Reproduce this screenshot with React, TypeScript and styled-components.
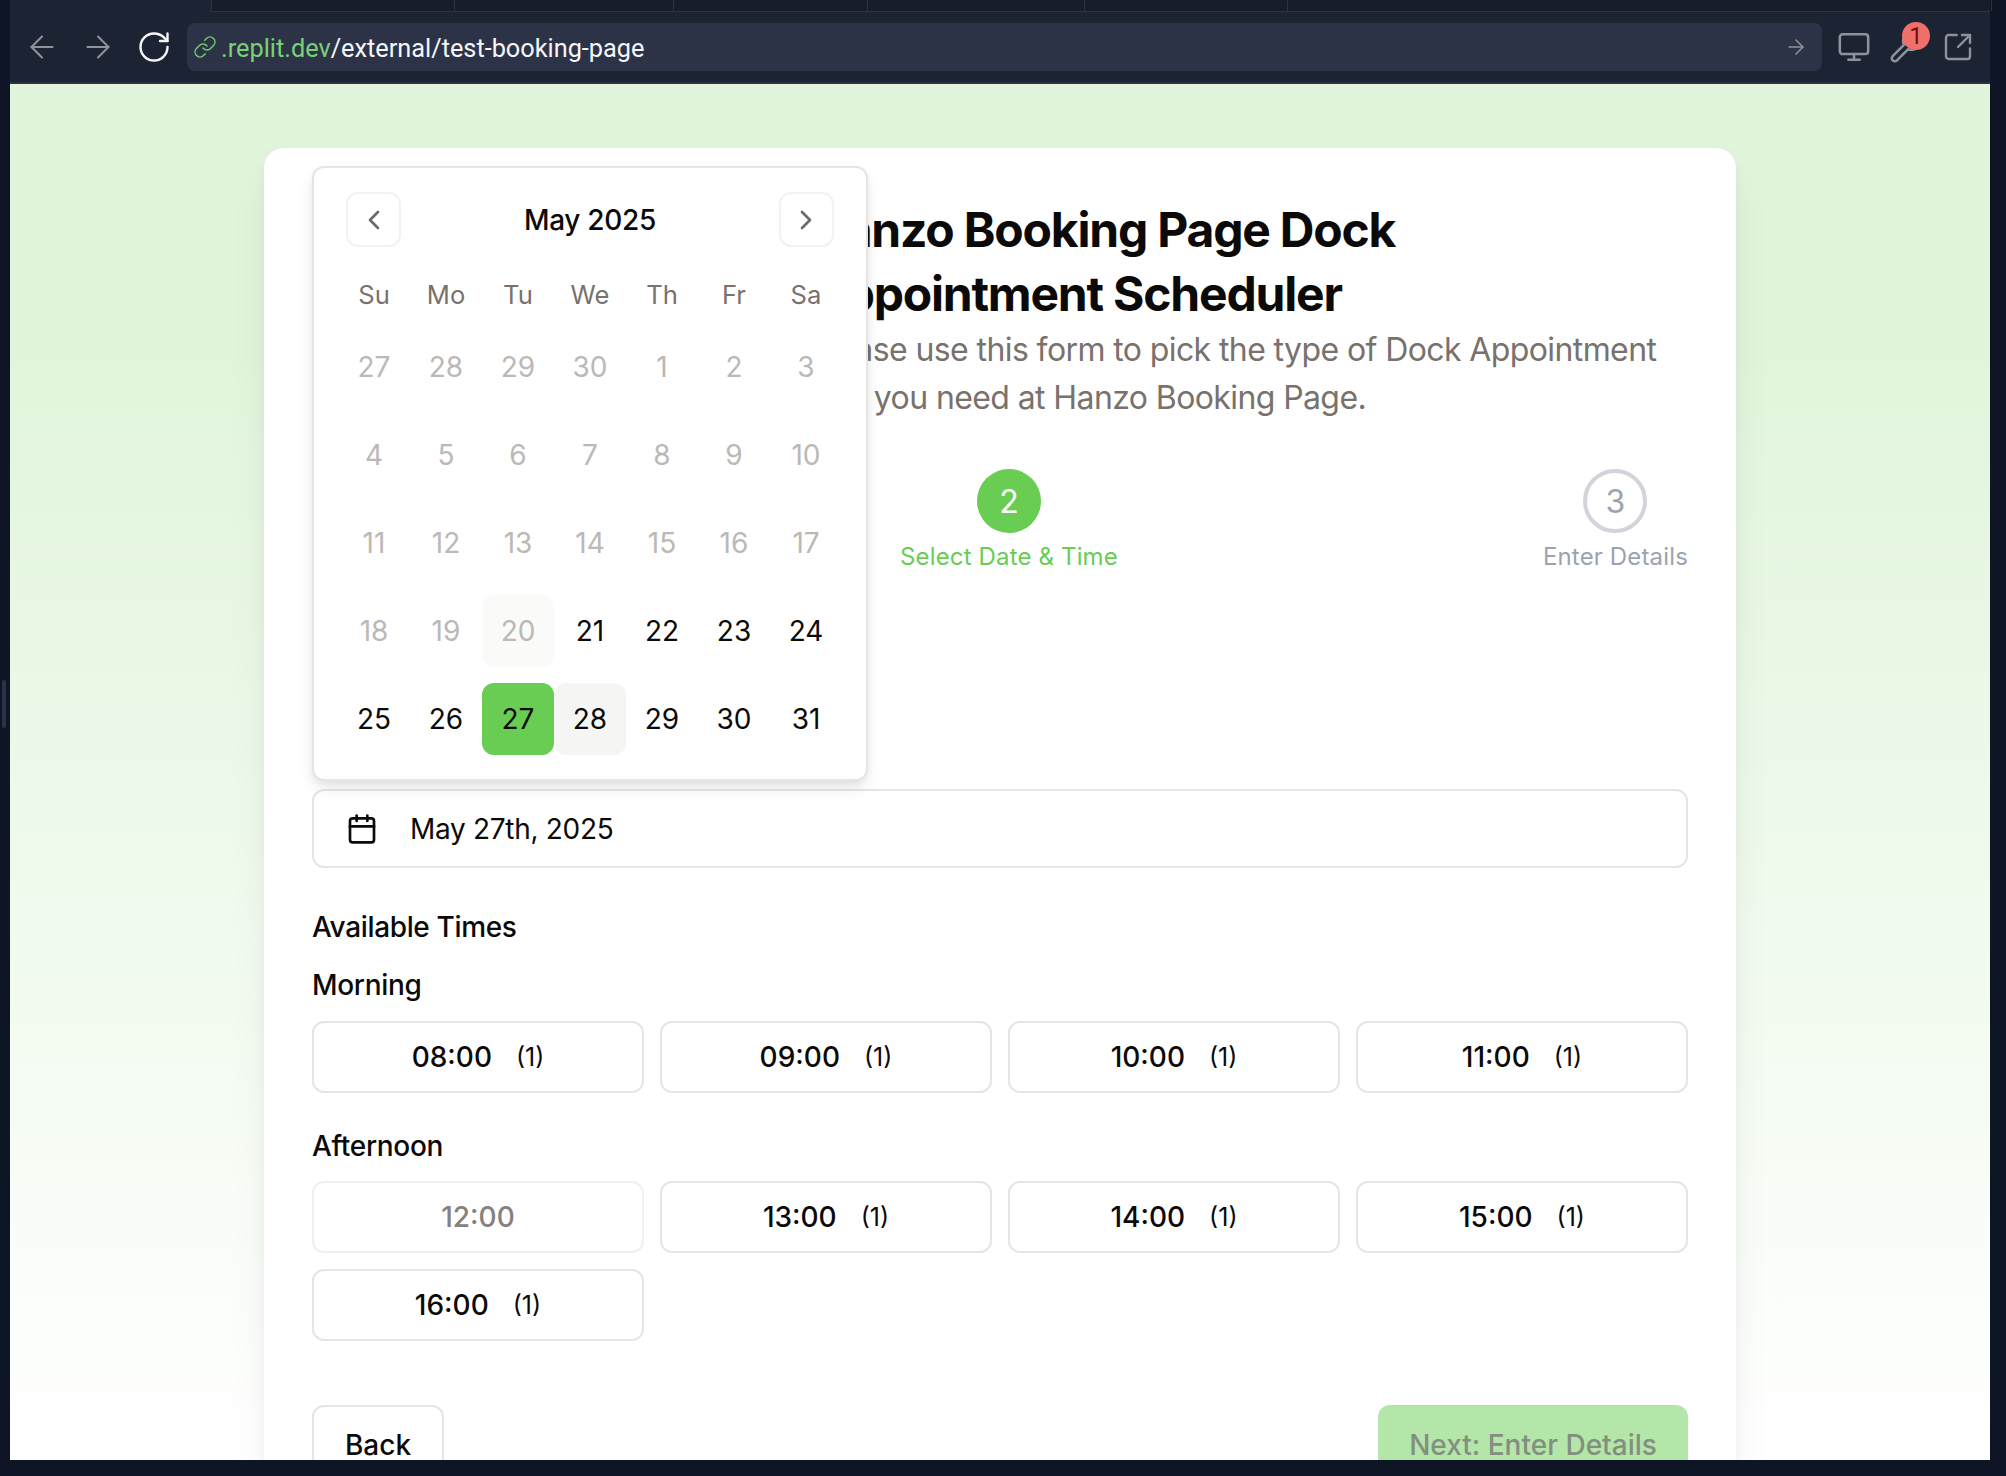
import React from "react";
import styled, { createGlobalStyle } from "styled-components";
import {
  ArrowLeft,
  ArrowRight,
  Calendar,
  ChevronLeft,
  ChevronRight,
  Link,
  Monitor,
  RotateCw,
  SquareArrowOutUpRight,
  Wrench,
} from "lucide-react";

const Global = createGlobalStyle`
  * { box-sizing: border-box; }
  html, body { margin: 0; padding: 0; background: #0e1525; }
  body { font-family: "Inter", "Liberation Sans", sans-serif; color: #0c0a09; }
`;

const Shell = styled.div`
  width: 2006px;
  height: 1476px;
  overflow: hidden;
  background: #0e1525;
  padding: 0 16px 16px 10px;
  display: flex;
  flex-direction: column;
  position: relative;
`;

const ResizeHandle = styled.div`
  position: absolute;
  left: 2px;
  top: 680px;
  width: 4px;
  height: 48px;
  border-radius: 2px;
  background: #2b3245;
`;

const BrowserBar = styled.div`
  height: 84px;
  flex: none;
  background: #1c2333;
  border-bottom: 2px solid #2b3245;
`;

const TabStrip = styled.div`
  height: 12px;
  margin-left: 201px;
  display: flex;
  background: #181d2c;
  border-bottom: 1px solid #2b3245;
  border-left: 1px solid #2b3245;
`;

const TabCell = styled.div<{ $w: number }>`
  width: ${(p) => p.$w}px;
  flex: none;
  border-right: 1px solid #2b3245;
`;

const Toolbar = styled.div`
  height: 48px;
  margin-top: 11px;
  padding: 0 14px 0 14px;
  display: flex;
  align-items: center;
`;

const NavGroup = styled.div`
  display: flex;
  gap: 20px;
  margin-right: 15px;
`;

const ToolIcon = styled.div<{ $light?: boolean }>`
  position: relative;
  width: 36px;
  height: 36px;
  flex: none;
  display: flex;
  align-items: center;
  justify-content: center;
  color: ${(p) => (p.$light ? "#f5f6f8" : "#8e929b")};
`;

const UrlBar = styled.div`
  flex: 1;
  height: 48px;
  background: #2d3347;
  border-radius: 8px;
  padding: 0 14px 0 6px;
  display: flex;
  align-items: center;
  font-family: "Roboto", "Liberation Sans", sans-serif;
  font-size: 25.3px;
  color: #f5f6f8;
`;

const UrlLink = styled.span`
  display: flex;
  color: #6fce6b;
  margin-right: 4px;
`;

const UrlHost = styled.span`
  color: #78d273;
  position: relative;
  top: 1px;
`;

const UrlPath = styled.span`
  flex: 1;
  position: relative;
  top: 1px;
`;

const UrlGo = styled.span`
  display: flex;
  color: #8e929b;
`;

const ToolGroup = styled.div`
  display: flex;
  gap: 16px;
  margin-left: 14px;
`;

const Badge = styled.span`
  position: absolute;
  top: -7px;
  left: 14px;
  width: 28px;
  height: 28px;
  border-radius: 50%;
  background: #f06f6a;
  color: #6d0f0f;
  font-family: "Roboto", sans-serif;
  font-size: 24px;
  line-height: 28px;
  text-align: center;
`;

const Page = styled.main`
  flex: 1;
  min-height: 0;
  overflow: hidden;
  padding-top: 64px;
  display: flex;
  justify-content: center;
  align-items: flex-start;
  background: linear-gradient(180deg, #e1f5dc 0%, #e1f5dc 20%, #ffffff 100%);
`;

const Card = styled.section`
  position: relative;
  width: 1472px;
  flex: none;
  padding: 50px 48px 48px;
  background: #fff;
  border-radius: 20px;
  box-shadow: 0 20px 40px rgba(0, 0, 0, 0.05), 0 4px 12px rgba(0, 0, 0, 0.04);
`;

const Header = styled.header`
  padding-left: 498px;
`;

const Title = styled.h1`
  margin: 0;
  font-size: 48px;
  line-height: 64px;
  font-weight: 700;
  letter-spacing: -1.2px;
`;

const Subtitle = styled.p`
  margin: 0;
  font-size: 32px;
  line-height: 48px;
  letter-spacing: -0.6px;
  color: #78716c;
`;

const Steps = styled.div`
  margin-top: 47px;
  display: flex;
  justify-content: space-between;
`;

const Step = styled.div`
  display: flex;
  flex-direction: column;
  align-items: center;
`;

const StepSlot = styled.div`
  width: 163px;
`;

const StepDot = styled.div<{ $active?: boolean }>`
  width: 64px;
  height: 64px;
  border-radius: 50%;
  display: flex;
  align-items: center;
  justify-content: center;
  font-size: 32px;
  background: ${(p) => (p.$active ? "#68cd52" : "#fff")};
  color: ${(p) => (p.$active ? "#fff" : "#9ca3af")};
  border: ${(p) => (p.$active ? "none" : "4px solid #d1d5db")};
`;

const StepLabel = styled.div<{ $active?: boolean }>`
  margin-top: 8px;
  font-size: 24px;
  line-height: 32px;
  letter-spacing: 0.15px;
  color: ${(p) => (p.$active ? "#68cd52" : "#9ca3af")};
`;

const DateField = styled.div`
  margin-top: 216px;
  height: 79px;
  border: 2px solid #e7e5e4;
  border-radius: 12px;
  padding: 0 32px;
  display: flex;
  align-items: center;
  gap: 32px;
  font-size: 28px;
  letter-spacing: -0.3px;
`;

const Heading = styled.div`
  margin-top: 39px;
  font-size: 28px;
  line-height: 40px;
  font-weight: 450;
  letter-spacing: -0.35px;
`;

const SubHeading = styled.div`
  font-size: 28px;
  line-height: 40px;
  font-weight: 450;
  letter-spacing: -0.3px;
`;

const MorningHeading = styled(SubHeading)`
  margin-top: 18px;
`;

const AfternoonHeading = styled(SubHeading)`
  margin-top: 33px;
  margin-bottom: -1px;
`;

const TimeGrid = styled.div`
  margin-top: 16px;
  display: grid;
  grid-template-columns: repeat(4, 1fr);
  gap: 16px;
`;

const TimeButton = styled.div<{ $disabled?: boolean }>`
  height: 72px;
  border: 2px solid ${(p) => (p.$disabled ? "#f1f0ef" : "#e7e5e4")};
  border-radius: 12px;
  display: flex;
  align-items: center;
  justify-content: center;
  font-size: 28px;
  font-weight: 450;
  color: ${(p) => (p.$disabled ? "#85817e" : "#0c0a09")};
`;

const Count = styled.span`
  margin-left: 24px;
  font-size: 25px;
  font-weight: 400;
`;

const Footer = styled.div`
  margin-top: 64px;
  display: flex;
  justify-content: space-between;
`;

const BackButton = styled.div`
  width: 132px;
  height: 80px;
  border: 2px solid #e7e5e4;
  border-radius: 12px;
  display: flex;
  align-items: center;
  justify-content: center;
  font-size: 28px;
  font-weight: 450;
`;

const NextButton = styled.div`
  width: 310px;
  height: 80px;
  border-radius: 12px;
  background: #b3e6a8;
  color: #838f80;
  display: flex;
  align-items: center;
  justify-content: center;
  font-size: 28px;
  font-weight: 450;
`;

const Popover = styled.div`
  position: absolute;
  left: 48px;
  top: 18px;
  width: 556px;
  padding: 24px;
  background: #fff;
  border: 2px solid #e7e5e4;
  border-radius: 12px;
  box-shadow: 0 8px 16px -2px rgba(0, 0, 0, 0.1), 0 4px 8px -2px rgba(0, 0, 0, 0.06);
`;

const MonthRow = styled.div`
  padding: 0 8px;
  height: 55px;
  display: flex;
  align-items: center;
  justify-content: space-between;
`;

const MonthLabel = styled.div`
  font-size: 28px;
  font-weight: 450;
  letter-spacing: -0.3px;
`;

const MonthNav = styled.div`
  width: 55px;
  height: 55px;
  border: 2px solid #f3f2f1;
  border-radius: 12px;
  display: flex;
  align-items: center;
  justify-content: center;
  color: #6b6b6b;
`;

const DayGrid = styled.div`
  margin-top: 27px;
  display: grid;
  grid-template-columns: repeat(7, 72px);
  row-gap: 16px;
`;

const WeekLabel = styled.div`
  height: 41px;
  display: flex;
  align-items: center;
  justify-content: center;
  font-size: 25.6px;
  color: #78716c;
`;

type DayKind = "muted" | "today" | "normal" | "selected" | "hover";

const dayBg: Record<DayKind, string> = {
  muted: "transparent",
  today: "#fafaf9",
  normal: "transparent",
  selected: "#68cd52",
  hover: "#f5f5f4",
};

const Day = styled.div<{ $kind: DayKind }>`
  height: 72px;
  border-radius: 12px;
  display: flex;
  align-items: center;
  justify-content: center;
  font-size: 28px;
  background: ${(p) => dayBg[p.$kind]};
  color: ${(p) => (p.$kind === "muted" || p.$kind === "today" ? "#bcb8b5" : "#0c0a09")};
`;

const weekDays = ["Su", "Mo", "Tu", "We", "Th", "Fr", "Sa"];
const tabs = [243, 219, 194, 217, 203, 704];

const dayKind = (n: number, inMay: boolean): DayKind => {
  if (!inMay || n < 20) return "muted";
  if (n === 20) return "today";
  if (n === 27) return "selected";
  if (n === 28) return "hover";
  return "normal";
};

const calendar: { label: number; kind: DayKind }[] = [
  ...[27, 28, 29, 30].map((n) => ({ label: n, kind: dayKind(n, false) })),
  ...Array.from({ length: 31 }, (_, i) => ({ label: i + 1, kind: dayKind(i + 1, true) })),
];

const morning = ["08:00", "09:00", "10:00", "11:00"];
const afternoon = ["13:00", "14:00", "15:00", "16:00"];

export default function App() {
  return (
    <Shell>
      <Global />
      <ResizeHandle />
      <BrowserBar>
        <TabStrip>
          {tabs.map((w, i) => (
            <TabCell key={i} $w={w} />
          ))}
        </TabStrip>
        <Toolbar>
          <NavGroup>
            <ToolIcon>
              <ArrowLeft size={36} strokeWidth={1.4} />
            </ToolIcon>
            <ToolIcon>
              <ArrowRight size={36} strokeWidth={1.4} />
            </ToolIcon>
            <ToolIcon $light>
              <RotateCw size={36} strokeWidth={1.6} />
            </ToolIcon>
          </NavGroup>
          <UrlBar>
            <UrlLink>
              <Link size={24} strokeWidth={1.5} />
            </UrlLink>
            <UrlHost>.replit.dev</UrlHost>
            <UrlPath>/external/test-booking-page</UrlPath>
            <UrlGo>
              <ArrowRight size={24} strokeWidth={1.5} />
            </UrlGo>
          </UrlBar>
          <ToolGroup>
            <ToolIcon>
              <Monitor size={34} strokeWidth={1.8} />
            </ToolIcon>
            <ToolIcon>
              <Wrench size={34} strokeWidth={1.8} />
              <Badge>1</Badge>
            </ToolIcon>
            <ToolIcon>
              <SquareArrowOutUpRight size={32} strokeWidth={1.8} />
            </ToolIcon>
          </ToolGroup>
        </Toolbar>
      </BrowserBar>
      <Page>
        <Card>
          <Header>
            <Title>Hanzo Booking Page Dock Appointment Scheduler</Title>
            <Subtitle>
              Please use this form to pick the type of Dock Appointment that you need at Hanzo Booking Page.
            </Subtitle>
          </Header>
          <Steps>
            <StepSlot />
            <Step>
              <StepDot $active>2</StepDot>
              <StepLabel $active>Select Date &amp; Time</StepLabel>
            </Step>
            <Step>
              <StepDot>3</StepDot>
              <StepLabel>Enter Details</StepLabel>
            </Step>
          </Steps>
          <DateField>
            <Calendar size={32} strokeWidth={2} />
            May 27th, 2025
          </DateField>
          <Heading>Available Times</Heading>
          <MorningHeading>Morning</MorningHeading>
          <TimeGrid>
            {morning.map((t) => (
              <TimeButton key={t}>
                {t}
                <Count>(1)</Count>
              </TimeButton>
            ))}
          </TimeGrid>
          <AfternoonHeading>Afternoon</AfternoonHeading>
          <TimeGrid>
            <TimeButton $disabled>12:00</TimeButton>
            {afternoon.map((t) => (
              <TimeButton key={t}>
                {t}
                <Count>(1)</Count>
              </TimeButton>
            ))}
          </TimeGrid>
          <Footer>
            <BackButton>Back</BackButton>
            <NextButton>Next: Enter Details</NextButton>
          </Footer>
          <Popover>
            <MonthRow>
              <MonthNav>
                <ChevronLeft size={32} strokeWidth={2} />
              </MonthNav>
              <MonthLabel>May 2025</MonthLabel>
              <MonthNav>
                <ChevronRight size={32} strokeWidth={2} />
              </MonthNav>
            </MonthRow>
            <DayGrid>
              {weekDays.map((d) => (
                <WeekLabel key={d}>{d}</WeekLabel>
              ))}
              {calendar.map(({ label, kind }, i) => (
                <Day key={i} $kind={kind}>
                  {label}
                </Day>
              ))}
            </DayGrid>
          </Popover>
        </Card>
      </Page>
    </Shell>
  );
}
